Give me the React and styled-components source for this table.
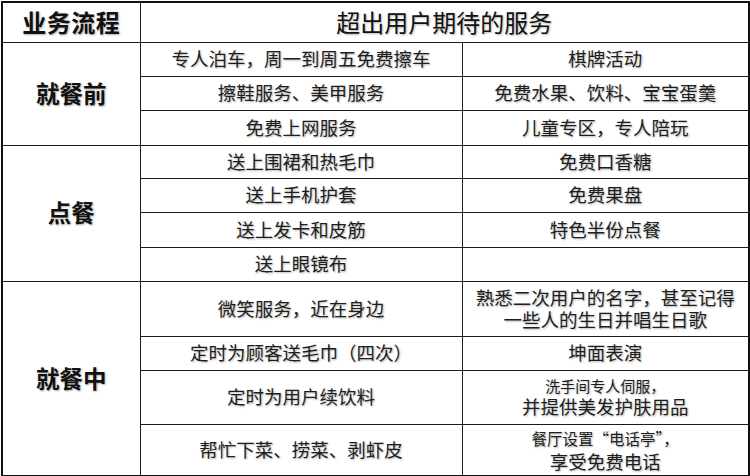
import styled, { createGlobalStyle } from "styled-components";

const GlobalStyle = createGlobalStyle`
  html, body {
    margin: 0;
    padding: 0;
    background: #ffffff;
  }
  body {
    font-family: "Noto Sans CJK SC", "Noto Sans", sans-serif;
  }
`;

const Page = styled.div`
  width: 750px;
  height: 476px;
  padding: 1px 0 0 1px;
  box-sizing: border-box;
  background: #ffffff;
`;

const Table = styled.table`
  width: 747px;
  border-collapse: collapse;
  table-layout: fixed;
  border: 2px solid #111111;
`;

const Row = styled.tr`
  height: ${props => props.$h}px;
`;

const Cell = styled.td`
  border: 1px solid #1a1a1a;
  padding: 0;
  text-align: center;
  vertical-align: middle;
  color: #1e1e1e;
  font-size: 18.5px;
  line-height: 1.15;
  text-shadow: 1px 1px 2px rgba(0, 0, 0, 0.3);
  white-space: nowrap;
`;

const HeadCell = styled(Cell)`
  font-size: 24px;
  font-weight: ${props => (props.$bold ? 700 : 400)};
  color: #111111;
  letter-spacing: ${props => (props.$bold ? "0.5px" : "0")};
`;

const StageCell = styled(Cell)`
  font-size: 23.5px;
  font-weight: 700;
  color: #111111;
`;

const Line = styled.div`
  font-size: ${props => props.$size || 18.5}px;
  line-height: ${props => props.$lh || 1.15}em;
`;

const sections = [
  {
    stage: "就餐前",
    rows: [
      { h: 34, left: "专人泊车，周一到周五免费擦车", right: "棋牌活动" },
      { h: 34, left: "擦鞋服务、美甲服务", right: "免费水果、饮料、宝宝蛋羹" },
      { h: 35, left: "免费上网服务", right: "儿童专区，专人陪玩" },
    ],
  },
  {
    stage: "点餐",
    rows: [
      { h: 33, left: "送上围裙和热毛巾", right: "免费口香糖" },
      { h: 34, left: "送上手机护套", right: "免费果盘" },
      { h: 35, left: "送上发卡和皮筋", right: "特色半份点餐" },
      { h: 34, left: "送上眼镜布", right: "" },
    ],
  },
  {
    stage: "就餐中",
    rows: [
      {
        h: 55,
        left: "微笑服务，近在身边",
        right: [
          { t: "熟悉二次用户的名字，甚至记得" },
          { t: "一些人的生日并唱生日歌" },
        ],
      },
      { h: 34, left: "定时为顾客送毛巾（四次）", right: "坤面表演" },
      {
        h: 54,
        left: "定时为用户续饮料",
        right: [
          { t: "洗手间专人伺服，", size: 15, lh: 1.35 },
          { t: "并提供美发护肤用品", lh: 1.15 },
        ],
      },
      {
        h: 52,
        left: "帮忙下菜、捞菜、剥虾皮",
        right: [
          { t: "餐厅设置“电话亭”，", size: 15.5, lh: 1.45 },
          { t: "享受免费电话", lh: 1.2 },
        ],
      },
    ],
  },
];

function Content({ value }) {
  if (Array.isArray(value)) {
    return value.map((line, i) => (
      <Line key={i} $size={line.size} $lh={line.lh}>
        {line.t}
      </Line>
    ));
  }
  return value;
}

export default function App() {
  return (
    <>
      <GlobalStyle />
      <Page>
        <Table>
          <colgroup>
            <col style={{ width: 138 }} />
            <col style={{ width: 322 }} />
            <col style={{ width: 287 }} />
          </colgroup>
          <tbody>
            <Row $h={40}>
              <HeadCell $bold>业务流程</HeadCell>
              <HeadCell colSpan={2}>超出用户期待的服务</HeadCell>
            </Row>
            {sections.map(section =>
              section.rows.map((row, i) => (
                <Row key={section.stage + i} $h={row.h}>
                  {i === 0 && (
                    <StageCell rowSpan={section.rows.length}>{section.stage}</StageCell>
                  )}
                  <Cell>
                    <Content value={row.left} />
                  </Cell>
                  <Cell>
                    <Content value={row.right} />
                  </Cell>
                </Row>
              ))
            )}
          </tbody>
        </Table>
      </Page>
    </>
  );
}
